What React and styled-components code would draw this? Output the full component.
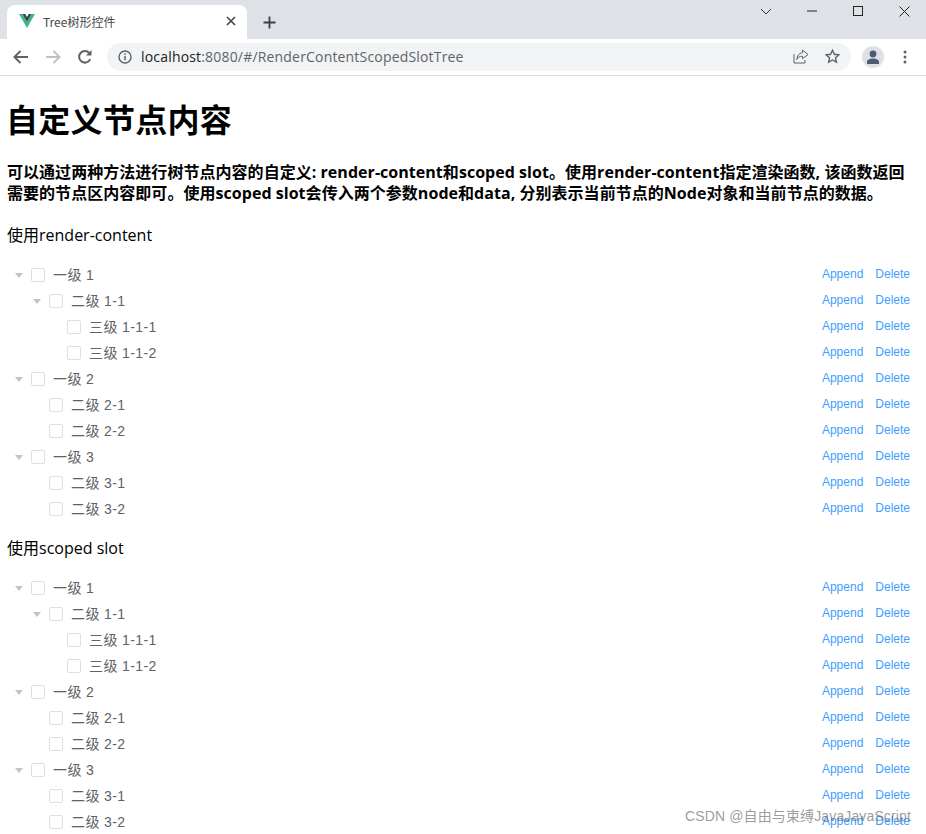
import React from "react";
import styled, { createGlobalStyle } from "styled-components";

const Global = createGlobalStyle`
  html, body { margin: 0; padding: 0; background: #fff; overflow: hidden; }
  body { width: 926px; height: 834px; font-family: "Open Sans", "Noto Sans CJK SC", sans-serif; }
  * { box-sizing: border-box; }
`;
const Page = styled.div`position: relative; width: 926px; height: 834px; overflow: hidden;`;
const TabStrip = styled.div`height: 39px; background: #dee1e6; display: flex; align-items: flex-end; padding-left: 7px; position: relative;`;
const Tab = styled.div`
  width: 240px; height: 34px; background: #fff; border-radius: 8px 8px 0 0;
  display: flex; align-items: center; padding: 0 11px 2px 12px; gap: 8px;
`;
const TabTitle = styled.span`flex: 1; font: 12px "Noto Sans CJK SC", sans-serif; color: #45494d; letter-spacing: 0;`;
const NewTab = styled.div`width: 24px; height: 24px; margin: 0 0 5px 10px; display: flex; align-items: center; justify-content: center;`;
const WinControls = styled.div`position: absolute; right: -1px; top: 0; display: flex; align-items: center; height: 22px;`;
const WinButton = styled.div`width: 46px; height: 22px; display: flex; align-items: center; justify-content: center;`;
const Toolbar = styled.div`height: 37px; background: #fff; border-bottom: 1px solid #d8d9da; display: flex; align-items: center; padding: 0 0 1px 5px;`;
const NavButton = styled.div`width: 32px; height: 28px; display: flex; align-items: center; justify-content: center;`;
const Omnibox = styled.div`
  width: 744px; height: 28px; margin-left: 6px; background: #f1f3f4; border-radius: 14px;
  display: flex; align-items: center; padding: 0 11px 0 11px;
`;
const UrlText = styled.span`flex: 1; margin-left: 9px; font: 14px "Open Sans", "Liberation Sans", sans-serif; color: #5f6368; letter-spacing: 0.18px;`;
const UrlHost = styled.span`color: #202124;`;
const Avatar = styled.div`
  width: 22px; height: 22px; margin-left: 11px; border-radius: 50%; background: #dee1e6; overflow: hidden;
  display: flex; align-items: center; justify-content: center;
`;
const Menu = styled.div`width: 22px; margin-left: 10px; display: flex; justify-content: center;`;
const Content = styled.main`padding: 0 7px; color: #000;`;
const Title = styled.h1`margin: 22px 0 0 -1px; font-size: 32px; line-height: 44px; font-weight: 700; letter-spacing: 0.3px;`;
const Lead = styled.h4`margin: 20px 0 0; font-size: 16px; line-height: 21px; font-weight: 700; width: 905px; letter-spacing: 0.04px;`;
const Sub = styled.p`margin: ${p => p.$top}px 0 0; font-size: 16px; line-height: 24px;`;
const Tree = styled.div`margin-top: ${p => p.$top}px; color: #606266; font-size: 14px;`;
const Row = styled.div`height: 26px; display: flex; align-items: center; padding-left: ${p => p.$level * 18}px; padding-right: 9px;`;
const Caret = styled.span`
  width: 24px; height: 24px; display: flex; align-items: center; justify-content: center; flex: none;
  &::before { content: ""; display: ${p => p.$hidden ? "none" : "block"}; border-style: solid; border-width: 5px 4px 0; border-color: #c0c4cc transparent transparent; }
`;
const Check = styled.span`width: 14px; height: 14px; border: 1px solid #dcdfe6; border-radius: 2px; background: #fff; flex: none;`;
const Label = styled.span`flex: 1; margin-left: 8px; font: 14px/26px "Liberation Sans", "Noto Sans CJK SC", sans-serif; color: #606266; letter-spacing: 0.4px;`;
const LinkBtn = styled.a`font: 12px "Liberation Sans", sans-serif; color: #409eff; margin-left: 12px; position: relative; top: -1px;`;
const Watermark = styled.div`
  position: absolute; left: 685px; top: 805px; font: 14px "Liberation Sans", "Noto Sans CJK SC", sans-serif;
  color: rgba(90, 90, 90, 0.62); white-space: nowrap; letter-spacing: 0.13px;
`;

const nodes = [
  [0, "一级 1", true], [1, "二级 1-1", true], [2, "三级 1-1-1"], [2, "三级 1-1-2"],
  [0, "一级 2", true], [1, "二级 2-1"], [1, "二级 2-2"],
  [0, "一级 3", true], [1, "二级 3-1"], [1, "二级 3-2"],
];

const TreeView = ({ top }) => (
  <Tree $top={top}>
    {nodes.map(([level, text, open], i) => (
      <Row key={i} $level={level}>
        <Caret $hidden={!open} />
        <Check />
        <Label>{text}</Label>
        <LinkBtn>Append</LinkBtn>
        <LinkBtn>Delete</LinkBtn>
      </Row>
    ))}
  </Tree>
);

const ico = { fill: "none", stroke: "#5f6368", strokeWidth: 2 };

export default function App() {
  return (
    <Page>
      <Global />
      <TabStrip>
        <Tab>
          <svg width="16" height="14" viewBox="0 0 16 14">
            <path d="M0 0h3.4L8 8 12.6 0H16L8 14z" fill="#41b883" />
            <path d="M3.4 0h2.9L8 3 9.7 0h2.9L8 8z" fill="#35495e" />
          </svg>
          <TabTitle>Tree树形控件</TabTitle>
          <svg width="10" height="10" viewBox="0 0 10 10"><path d="M1 1l8 8M9 1l-8 8" stroke="#45494d" strokeWidth="1.7" /></svg>
        </Tab>
        <NewTab>
          <svg width="13" height="13" viewBox="0 0 13 13"><path d="M6.5 0.5v12M0.5 6.5h12" stroke="#3c4043" strokeWidth="1.8" /></svg>
        </NewTab>
        <WinControls>
          <WinButton><svg width="12" height="7" viewBox="0 0 12 7"><path d="M1 1l5 5 5-5" fill="none" stroke="#333" /></svg></WinButton>
          <WinButton><svg width="10" height="2" viewBox="0 0 10 2"><path d="M0 1h10" stroke="#222" /></svg></WinButton>
          <WinButton><svg width="10" height="10" viewBox="0 0 10 10"><rect x=".5" y=".5" width="9" height="9" fill="none" stroke="#222" /></svg></WinButton>
          <WinButton><svg width="11" height="11" viewBox="0 0 11 11"><path d="M.5.5l10 10M10.5.5l-10 10" stroke="#222" /></svg></WinButton>
        </WinControls>
      </TabStrip>
      <Toolbar>
        <NavButton><svg width="16" height="14" viewBox="0 0 16 14"><path d="M15 7H2M7.5 1L1.5 7l6 6" {...ico} /></svg></NavButton>
        <NavButton><svg width="16" height="14" viewBox="0 0 16 14"><path d="M1 7h13M8.5 1l6 6-6 6" {...ico} stroke="#bdc1c6" /></svg></NavButton>
        <NavButton>
          <svg width="16" height="16" viewBox="0 0 16 16">
            <path d="M13.2 10.2A5.8 5.8 0 1 1 12.3 4" {...ico} />
            <path d="M14.5 1v5.5H9z" fill="#5f6368" />
          </svg>
        </NavButton>
        <Omnibox>
          <svg width="14" height="14" viewBox="0 0 14 14">
            <circle cx="7" cy="7" r="6" fill="none" stroke="#5f6368" strokeWidth="1.4" />
            <path d="M7 6v4.2" stroke="#5f6368" strokeWidth="1.5" />
            <circle cx="7" cy="4.1" r="0.9" fill="#5f6368" />
          </svg>
          <UrlText><UrlHost>localhost</UrlHost>:8080/#/RenderContentScopedSlotTree</UrlText>
          <svg width="16" height="15" viewBox="0 0 16 15" style={{ marginRight: 16 }}>
            <path d="M9.5 1.2l5.5 4.3-5.5 4.2V7.2C6.5 7.2 4.8 8.4 3.8 10.5 4 7 6 4 9.5 3.7zM1 5v9h11v-3" fill="none" stroke="#5f6368" strokeWidth="1" />
          </svg>
          <svg width="15" height="15" viewBox="0 0 15 15">
            <path d="M7.5 1.2l1.9 4.1 4.4.5-3.3 3 .9 4.4-3.9-2.2-3.9 2.2.9-4.4-3.3-3 4.4-.5z" fill="none" stroke="#5f6368" strokeWidth="1.4" />
          </svg>
        </Omnibox>
        <Avatar>
          <svg width="14" height="14" viewBox="0 0 14 14">
            <circle cx="7" cy="4" r="3.4" fill="#4f5b71" />
            <path d="M1 14v-2c0-2.2 3-3.4 6-3.4s6 1.2 6 3.4v2z" fill="#4f5b71" />
          </svg>
        </Avatar>
        <Menu>
          <svg width="4" height="14" viewBox="0 0 4 14" fill="#5f6368">
            <circle cx="2" cy="2" r="1.5" /><circle cx="2" cy="7" r="1.5" /><circle cx="2" cy="12" r="1.5" />
          </svg>
        </Menu>
      </Toolbar>
      <Content>
        <Title>自定义节点内容</Title>
        <Lead>可以通过两种方法进行树节点内容的自定义: render-content和scoped slot。使用render-content指定渲染函数, 该函数返回需要的节点区内容即可。使用scoped slot会传入两个参数node和data, 分别表示当前节点的Node对象和当前节点的数据。</Lead>
        <Sub $top={19}>使用render-content</Sub>
        <TreeView top={15} />
        <Sub $top={14}>使用scoped slot</Sub>
        <TreeView top={15} />
      </Content>
      <Watermark>CSDN @自由与束缚JavaJavaScript</Watermark>
    </Page>
  );
}
